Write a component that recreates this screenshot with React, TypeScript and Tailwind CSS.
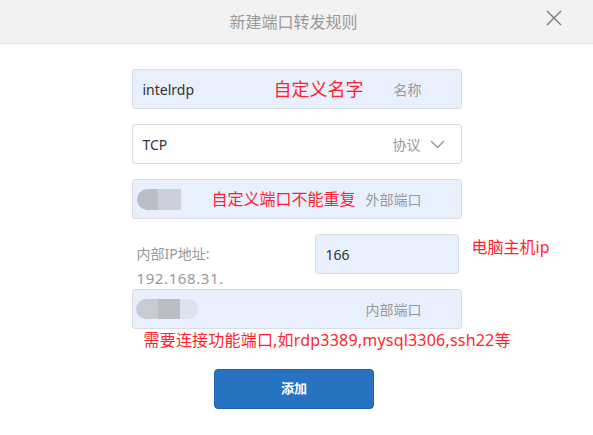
const font = { fontFamily: '"Noto Sans", "Noto Sans CJK SC", sans-serif' };

const App = () => {
  return (
    <div className="w-[593px] h-[435px] bg-white" style={font}>
      {/* header */}
      <div className="h-[44px] bg-[#f2f2f2] border-b border-[#e4e4e4] flex items-center justify-center relative">
        <span className="text-[16px] text-[#999999] mr-[6px]">新建端口转发规则</span>
        <svg
          className="absolute left-[546px] top-[10px]"
          width="16"
          height="16"
          viewBox="0 0 16 16"
        >
          <path d="M1 1L15 15M15 1L1 15" stroke="#7a7a7a" strokeWidth="1.4" fill="none" />
        </svg>
      </div>

      <div className="w-[330px] mx-auto pt-[25px] flex flex-col gap-[15px]">
        {/* name */}
        <div className="h-[40px] bg-[#e8f0fe] border border-[#d9dce3] rounded-[3px] flex items-center pl-[10px] pr-[39px]">
          <span className="text-[14px] text-[#333] w-[131px]">intelrdp</span>
          <span className="text-[18px] text-[#ff1f2e]">自定义名字</span>
          <span className="ml-auto text-[14px] text-[#999]">名称</span>
        </div>

        {/* protocol */}
        <div className="h-[40px] bg-white border border-[#dcdcdc] rounded-[3px] flex items-center pl-[10px] pr-[16px]">
          <span className="text-[14px] text-[#333]">TCP</span>
          <span className="ml-auto text-[14px] text-[#999]">协议</span>
          <svg className="ml-[9px]" width="15" height="9" viewBox="0 0 15 9">
            <path d="M1 1L7.5 7.5L14 1" stroke="#9a9a9a" strokeWidth="1.5" fill="none" />
          </svg>
        </div>

        {/* external port */}
        <div className="h-[40px] bg-[#e8f0fe] border border-[#d9dce3] rounded-[3px] flex items-center pl-[4px] pr-[39px]">
          <div className="flex h-[21px] w-[44px] blur-[0.6px]">
            <div className="w-[21px] bg-[#b9bec7] rounded-l-full" />
            <div className="w-[23px] bg-[#cbd0da]" />
          </div>
          <span className="ml-[31px] text-[16px] text-[#ff1f2e]">自定义端口不能重复</span>
          <span className="ml-auto text-[14px] text-[#999]">外部端口</span>
        </div>

        {/* internal ip */}
        <div className="h-[40px] flex items-center relative">
          <div className="w-[183px] pl-[5px] flex flex-col gap-[6px] pt-[23px] text-[#999] leading-[18px]">
            <span className="text-[14px]">内部IP地址:</span>
            <span className="text-[15px] tracking-[0.6px]">192.168.31.</span>
          </div>
          <div className="h-[40px] w-[144px] bg-[#e8f0fe] border border-[#d9dce3] rounded-[3px] flex items-center pl-[10px]">
            <span className="text-[14px] text-[#333]">166</span>
          </div>
          <span className="absolute left-[340px] top-[1px] text-[16px] text-[#ff1f2e] whitespace-nowrap">
            电脑主机ip
          </span>
        </div>

        {/* internal port */}
        <div className="flex flex-col">
          <div className="h-[40px] bg-[#e8f0fe] border border-[#d9dce3] rounded-[3px] flex items-center pl-[3px] pr-[39px]">
            <div className="flex h-[20px] w-[62px] blur-[0.6px]">
              <div className="w-[22px] bg-[#c6cbd4] rounded-l-full" />
              <div className="w-[22px] bg-[#b9bec7]" />
              <div className="w-[18px] bg-[#dde3ee] rounded-r-full" />
            </div>
            <span className="ml-auto text-[14px] text-[#999]">内部端口</span>
          </div>
          <span className="pl-[12px] pt-[1px] text-[16px] leading-[20px] tracking-[0.2px] text-[#ff1f2e] whitespace-nowrap">
            需要连接功能端口,如rdp3389,mysql3306,ssh22等
          </span>
        </div>
      </div>

      <div className="flex pl-[214px] pt-[19px]">
        <button className="w-[160px] h-[40px] bg-[#2773c1] border border-[#1d62ad] rounded-[4px] text-white text-[13px] font-bold">
          添加
        </button>
      </div>
    </div>
  );
};

export default App;
